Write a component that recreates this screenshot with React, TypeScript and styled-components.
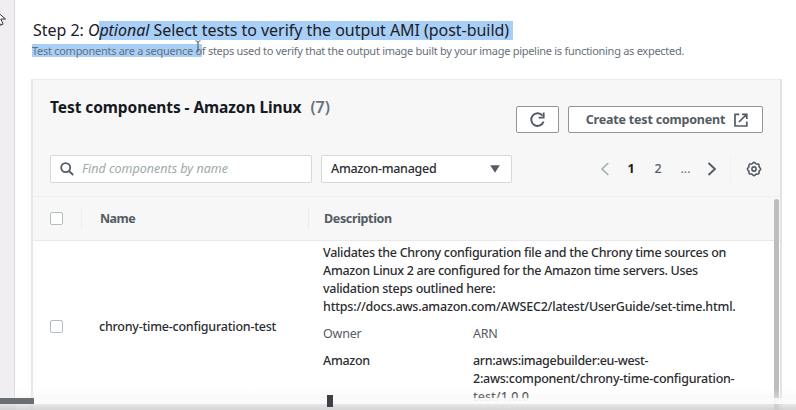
import React from 'react';
import styled, { createGlobalStyle } from 'styled-components';

const Global = createGlobalStyle`
  * { box-sizing: border-box; }
  html, body { margin: 0; padding: 0; background: #fff; }
  body { width: 796px; height: 410px; overflow: hidden; font-family: "Noto Sans", "Open Sans", sans-serif; color: #232527; }
`;

const Page = styled.div`
  position: relative;
  display: flex;
  width: 796px;
  height: 410px;
  overflow: hidden;
`;
const Rail = styled.aside`
  flex: 0 0 15px;
  background: #f0eef1;
  border-right: 1px solid #d9dadb;
`;
const Main = styled.main`
  flex: 0 0 781px;
  padding: 21px 14px 0 16px;
  border-right: 1px solid #fafafa;
`;
const Line = styled.div<{ $size: number; $h: number; $ls?: number; $w?: number; $c?: string }>`
  font-size: ${p => p.$size}px;
  line-height: ${p => p.$h}px;
  height: ${p => p.$h}px;
  letter-spacing: ${p => p.$ls ?? 0}px;
  font-weight: ${p => p.$w ?? 400};
  color: ${p => p.$c ?? '#2b2d30'};
  white-space: nowrap;
`;
const StepTitle = styled(Line).attrs({ as: 'h2' })`
  margin: 0 0 0 2px;
  display: flex;
  white-space: pre;
`;
const Hint = styled(Line)`
  margin: 4px 0 0 1px;
  display: flex;
  white-space: pre;
`;
const Marked = styled.span<{ $pad?: number }>`
  background: #a8cff8;
  padding-right: ${p => p.$pad ?? 0}px;
`;
const Panel = styled.section`
  width: 751px;
  height: 340px;
  margin-top: 22px;
  border: 1px solid #eaebeb;
  border-left: 2px solid #e6e7e8;
  border-right: 2px solid #e2e3e4;
  background: #fff;
`;
const Header = styled.header`
  height: 117px;
  padding: 17px 17px 0;
  background: #f7f7f7;
  border-bottom: 1px solid #efefed;
`;
const TitleRow = styled.div`
  display: flex;
  height: 59px;
`;
const Count = styled(Line)`
  margin-left: 9px;
`;
const Actions = styled.div`
  display: flex;
  gap: 9px;
  margin: 9px 0 0 auto;
`;
const Button = styled.button<{ $width: number; $pad?: number }>`
  display: flex;
  align-items: center;
  justify-content: center;
  gap: 9px;
  width: ${p => p.$width}px;
  height: 27px;
  padding: 0 0 0 ${p => p.$pad ?? 0}px;
  font-family: inherit;
  background: #fff;
  border: 1px solid #8f959b;
  border-radius: 2px;
  color: #545b64;
`;
const FilterRow = styled.div`
  display: flex;
  align-items: center;
  height: 26px;
`;
const Field = styled.div<{ $width: number }>`
  display: flex;
  align-items: center;
  width: ${p => p.$width}px;
  height: 28px;
  padding: 0 11px 0 9px;
  margin-right: 9px;
  background: #fff;
  border: 1px solid #d3d9d9;
  border-radius: 2px;
`;
const Placeholder = styled(Line)`
  margin-left: 8px;
  font-style: italic;
`;
const Pager = styled.nav`
  display: flex;
  align-items: center;
  margin-left: 79px;
  height: 27px;
  padding-right: 13px;
  border-right: 1px solid #f0f0f0;
`;
const PageItem = styled(Line)<{ $box: number }>`
  width: ${p => p.$box}px;
  text-align: center;
`;
const Gear = styled.svg`
  margin-left: 15px;
`;
const TableHead = styled.div`
  display: flex;
  align-items: center;
  height: 44px;
  padding-left: 17px;
  background: #f7f7f7;
  border-bottom: 1px solid #e9e9e9;
`;
const Check = styled.span`
  flex: none;
  width: 13px;
  height: 13px;
  background: #fff;
  border: 1px solid #b4bdc2;
  border-radius: 2px;
`;
const HeadCell = styled.div<{ $gap: number; $width: number; $pad: number }>`
  margin-left: ${p => p.$gap}px;
  width: ${p => p.$width}px;
  height: 22px;
  padding-left: ${p => p.$pad}px;
  border-left: 1px solid #ededed;
`;
const Body = styled.div`
  display: flex;
  align-items: flex-start;
  padding-left: 17px;
`;
const RowName = styled.div`
  display: flex;
  align-items: flex-start;
  gap: 36px;
  width: 273px;
  padding-top: 79px;
`;
const NameText = styled(Line)`
  margin-top: -2px;
`;
const Details = styled.div`
  padding-top: 3px;
`;
const Pairs = styled.div`
  display: grid;
  grid-template-columns: 150px auto;
  row-gap: 9px;
  margin-top: 9px;
`;
const ScrollThumb = styled.div`
  position: absolute;
  left: 774px;
  top: 199px;
  width: 5px;
  height: 211px;
  border-radius: 3px 3px 0 0;
  background: #bdbdbd;
`;
const Player = styled.div`
  position: absolute;
  inset: 389px 0 0 0;
  padding-top: 9px;
  background: linear-gradient(rgba(255,255,255,0), rgba(240,240,240,.5) 50%, rgba(205,205,205,.88));
`;
const Track = styled.div`
  height: 6px;
  background: rgba(250,252,251,.88);
`;
const Played = styled.div`
  width: 34px;
  height: 6px;
  background: #6b6f74;
`;
const Marker = styled.div`
  position: absolute;
  left: 327px;
  top: 6px;
  width: 6px;
  height: 12px;
  background: #3c4147;
`;
const Cursor = styled.svg<{ $x: number; $y: number }>`
  position: absolute;
  left: ${p => p.$x}px;
  top: ${p => p.$y}px;
`;
const Caret = styled.svg`
  margin-left: auto;
`;

const description: [string, number][] = [
  ['Validates the Chrony configuration file and the Chrony time sources on', -0.28],
  ['Amazon Linux 2 are configured for the Amazon time servers. Uses', -0.3],
  ['validation steps outlined here:', -0.28],
  ['https://docs.aws.amazon.com/AWSEC2/latest/UserGuide/set-time.html.', -0.21],
];

// Closed outline with eight rounded teeth around the centre of a 16px box.
const gearOutline =
  Array.from({ length: 72 }, (_, i) => {
    const a = (i / 72) * Math.PI * 2;
    const r = 6.1 + 0.5 * Math.cos(a * 8);
    return `${i ? 'L' : 'M'}${(8 + r * Math.cos(a)).toFixed(2)} ${(8 + r * Math.sin(a)).toFixed(2)}`;
  }).join('') + 'Z';

export default function App() {
  return (
    <Page>
      <Global />
      <Rail />
      <Main>
        <StepTitle $size={16} $h={19} $ls={-0.04} $c="#1d2025">
          <span>Step 2: <i>O</i></span>
          <Marked $pad={4}><i>ptional</i> Select tests to verify the output AMI (post-build)</Marked>
        </StepTitle>
        <Hint $size={11} $h={13} $ls={-0.28} $c="#687078">
          <Marked>Test components are a sequence o</Marked>
          <span>f steps used to verify that the output image built by your image pipeline is functioning as expected.</span>
        </Hint>
        <Panel>
          <Header>
            <TitleRow>
              <Line $size={15.5} $h={20} $ls={-0.08} $w={700} $c="#16191f">Test components - Amazon Linux</Line>
              <Count $size={16} $h={20} $w={600} $c="#687078">(7)</Count>
              <Actions>
                <Button $width={43} aria-label="Refresh">
                  <svg width="17" height="17" viewBox="0 0 17 17" fill="none" stroke="#545b64" strokeWidth="1.9">
                    <path d="M14.6 10.4A6.3 6.3 0 1 1 13.6 4.8" />
                    <path d="M14.7 1.4v5.2H9.6" strokeWidth="1.8" />
                  </svg>
                </Button>
                <Button $width={195} $pad={3}>
                  <Line $size={12.5} $h={18} $ls={-0.2} $w={700} $c="#545b64">Create test component</Line>
                  <svg width="14" height="14" viewBox="0 0 14 14" fill="none" stroke="#545b64" strokeWidth="1.7">
                    <path d="M5.3 1.3H1v11.7h11.8V8.6M8 1.3h4.8v4.6M12.5 1.5 5 9" />
                  </svg>
                </Button>
              </Actions>
            </TitleRow>
            <FilterRow>
              <Field $width={262}>
                <svg width="14" height="14" viewBox="0 0 14 14" fill="none" stroke="#545b64" strokeWidth="1.8">
                  <circle cx="5.7" cy="5.6" r="4.5" />
                  <path d="m9 9 4.2 4" />
                </svg>
                <Placeholder $size={12.5} $h={18} $c="#9da9aa">Find components by name</Placeholder>
              </Field>
              <Field $width={191}>
                <Line $size={12.5} $h={18} $ls={-0.28} $w={500}>Amazon-managed</Line>
                <Caret width="10" height="8" viewBox="0 0 10 8">
                  <path d="M.2.2h9.6L5 7.8z" fill="#545b64" />
                </Caret>
              </Field>
              <Pager>
                <svg width="10" height="14" viewBox="0 0 10 14" fill="none" stroke="#a5b0b1" strokeWidth="1.7"><path d="M8.3 1 2 7l6.3 6" /></svg>
                <PageItem $box={42} $size={12.5} $h={18} $w={700} $c="#16191f">1</PageItem>
                <PageItem $box={12} $size={12.5} $h={18} $w={500} $c="#545b64">2</PageItem>
                <PageItem $box={43} $size={12.5} $h={18} $c="#687078">...</PageItem>
                <svg width="10" height="14" viewBox="0 0 10 14" fill="none" stroke="#545b64" strokeWidth="1.9"><path d="m1.5 1 6.4 6-6.4 6" /></svg>
              </Pager>
              <Gear width="16" height="16" viewBox="0 0 16 16" fill="none" stroke="#545b64" strokeWidth="1.6">
                <path d={gearOutline} strokeLinejoin="round" />
                <circle cx="8" cy="8" r="2.1" />
              </Gear>
            </FilterRow>
          </Header>
          <TableHead>
            <Check />
            <HeadCell $gap={18} $width={227} $pad={18}><Line $size={12.5} $h={22} $ls={-0.55} $w={700} $c="#545b64">Name</Line></HeadCell>
            <HeadCell $gap={0} $width={200} $pad={15}><Line $size={12.5} $h={22} $ls={-0.35} $w={700} $c="#545b64">Description</Line></HeadCell>
          </TableHead>
          <Body>
            <RowName>
              <Check />
              <NameText $size={12.5} $h={18} $ls={-0.23} $w={500}>chrony-time-configuration-test</NameText>
            </RowName>
            <Details>
              {description.map(([text, ls]) => (
                <Line key={text} $size={12.5} $h={18} $ls={ls} $w={500}>{text}</Line>
              ))}
              <Pairs>
                <Line $size={12.5} $h={18} $ls={-0.2} $c="#545b64">Owner</Line>
                <Line $size={12.5} $h={18} $ls={-0.2} $c="#545b64">ARN</Line>
                <Line $size={12.5} $h={18} $ls={-0.3} $w={500}>Amazon</Line>
                <div>
                  <Line $size={12.5} $h={18} $ls={-0.33} $w={500}>arn:aws:imagebuilder:eu-west-</Line>
                  <Line $size={12.5} $h={18} $ls={-0.25} $w={500}>2:aws:component/chrony-time-configuration-</Line>
                  <Line $size={12.5} $h={18} $w={500}>test/1.0.0</Line>
                </div>
              </Pairs>
            </Details>
          </Body>
        </Panel>
      </Main>
      <ScrollThumb />
      <Cursor $x={-6} $y={10} width="13" height="17" viewBox="0 0 13 17">
        <path d="M1 0v13l3.2-3 2.4 5.2 2.5-1.1L6.8 9h4.7z" fill="#fff" stroke="#333" />
      </Cursor>
      <Cursor $x={194} $y={40} width="8" height="15" viewBox="0 0 8 15" fill="none" stroke="#4b5560" strokeWidth="1">
        <path d="M1.5.8C3 .8 4 1.5 4 3v9M6.5.8C5 .8 4 1.5 4 3" />
      </Cursor>
      <Player>
        <Track><Played /></Track>
        <Marker />
      </Player>
    </Page>
  );
}
